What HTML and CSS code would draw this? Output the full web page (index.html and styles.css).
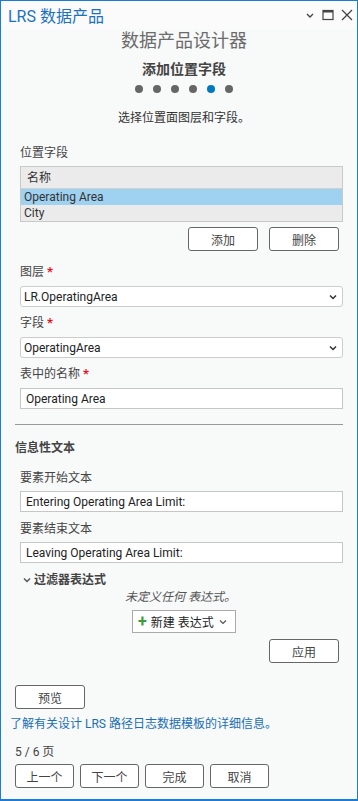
FILE: index.html
```html
<!DOCTYPE html>
<html lang="zh-CN">
<head>
    <meta charset="UTF-8">
    <meta name="viewport" content="width=device-width, initial-scale=1.0">
    <title>LRS 数据产品</title>
    <link rel="stylesheet" href="styles.css">
</head>
<body>
    <div class="window">
        <div class="titlebar">
            <span class="title">LRS 数据产品</span>
            <div class="win-icons">
                <svg width="10" height="10" viewBox="0 0 10 10"><path d="M2 4 L5 7 L8 4" fill="none" stroke="#444" stroke-width="1.4"/></svg>
                <svg width="12" height="12" viewBox="0 0 12 12"><rect x="1" y="1.5" width="10" height="9" fill="none" stroke="#444" stroke-width="1.2"/><rect x="1" y="1" width="10" height="2.5" fill="#444"/></svg>
                <svg width="12" height="12" viewBox="0 0 12 12"><path d="M1 1 L11 11 M11 1 L1 11" stroke="#444" stroke-width="1.3"/></svg>
            </div>
        </div>

        <div class="content">
            <div class="header">
                <div class="designer">数据产品设计器</div>
                <div class="step">添加位置字段</div>
                <div class="dots">
                    <span class="dot"></span>
                    <span class="dot"></span>
                    <span class="dot"></span>
                    <span class="dot"></span>
                    <span class="dot active"></span>
                    <span class="dot"></span>
                </div>
                <p class="desc">选择位置面图层和字段。</p>
            </div>

            <div class="group">
                <div class="label first">位置字段</div>
                <div class="table">
                    <div class="row head">名称</div>
                    <div class="row selected">Operating Area</div>
                    <div class="row">City</div>
                </div>
                <div class="btn-row right">
                    <button class="btn">添加</button>
                    <button class="btn">删除</button>
                </div>

                <div class="label after-btn">图层 <span class="req">*</span></div>
                <div class="select">LR.OperatingArea
                    <svg width="10" height="10" viewBox="0 0 10 10"><path d="M2 3.5 L5 6.5 L8 3.5" fill="none" stroke="#333" stroke-width="1.5"/></svg>
                </div>
                <div class="label">字段 <span class="req">*</span></div>
                <div class="select">OperatingArea
                    <svg width="10" height="10" viewBox="0 0 10 10"><path d="M2 3.5 L5 6.5 L8 3.5" fill="none" stroke="#333" stroke-width="1.5"/></svg>
                </div>
                <div class="label">表中的名称 <span class="req">*</span></div>
                <div class="input">Operating Area</div>
            </div>

            <hr class="divider">

            <div class="section-title">信息性文本</div>
            <div class="group info">
                <div class="label first">要素开始文本</div>
                <div class="input">Entering Operating Area Limit:</div>
                <div class="label">要素结束文本</div>
                <div class="input">Leaving Operating Area Limit:</div>
            </div>

            <div class="filter-title">
                <svg width="8" height="8" viewBox="0 0 8 8"><path d="M1 2.5 L4 5.5 L7 2.5" fill="none" stroke="#555" stroke-width="1.5"/></svg>
                过滤器表达式
            </div>
            <div class="empty">未定义任何 表达式。</div>
            <div class="center">
                <div class="new-btn">
                    <span class="plus">+</span> 新建 表达式
                    <svg width="10" height="10" viewBox="0 0 10 10"><path d="M2 3.5 L5 6.5 L8 3.5" fill="none" stroke="#555" stroke-width="1.2"/></svg>
                </div>
            </div>
            <div class="btn-row right apply">
                <button class="btn">应用</button>
            </div>

            <div class="btn-row preview">
                <button class="btn">预览</button>
            </div>
            <a class="link" href="#">了解有关设计 LRS 路径日志数据模板的详细信息。</a>

            <div class="pager">5 / 6 页</div>
            <div class="btn-row nav">
                <button class="btn small">上一个</button>
                <button class="btn small">下一个</button>
                <button class="btn small">完成</button>
                <button class="btn small">取消</button>
            </div>
        </div>
    </div>
</body>
</html>
```

FILE: styles.css
```css
* {
    margin: 0;
    padding: 0;
    box-sizing: border-box;
}
body {
    font-family: Roboto, "Noto Sans CJK SC", sans-serif;
    font-size: 12px;
    color: #333;
    background: #fff;
}
.window {
    width: 358px;
    height: 801px;
    border: 1px solid #1c7bd4;
    border-bottom-width: 2px;
    background: #f8f9f9;
    display: flex;
    flex-direction: column;
}
.titlebar {
    height: 28px;
    flex-shrink: 0;
    display: flex;
    align-items: center;
    justify-content: space-between;
    padding: 0 4px 0 7px;
    background: #fbfbfb;
}
.title {
    color: #1a72bf;
    font-size: 16px;
}
.win-icons {
    display: flex;
    align-items: center;
    gap: 7px;
}
.content {
    padding: 0 14px 0 9px;
}
.header {
    padding-left: 15px;
}
.designer {
    text-align: center;
    font-size: 18px;
    color: #6b6b6b;
    line-height: 24px;
}
.step {
    text-align: center;
    font-size: 14px;
    font-weight: bold;
    color: #444;
    margin-top: 7px;
    line-height: 18px;
}
.dots {
    display: flex;
    justify-content: center;
    gap: 10px;
    margin-top: 7px;
}
.dot {
    width: 8px;
    height: 8px;
    border-radius: 50%;
    background: #666;
}
.dot.active {
    background: #0079c1;
}
.desc {
    text-align: center;
    margin-top: 16px;
    line-height: 18px;
}
.group {
    padding-left: 10px;
}
.label {
    margin-top: 7px;
    line-height: 18px;
    color: #444;
}
.label.first {
    margin-top: 17px;
}
.label.after-btn {
    margin-top: 12px;
}
.req {
    color: #e81123;
    font-weight: bold;
    font-size: 13px;
    line-height: 0;
}
.table {
    margin-top: 4px;
    border: 1px solid #c9c9c9;
    background: #ebebeb;
}
.row {
    height: 16px;
    line-height: 16px;
    padding-left: 3px;
    color: #333;
}
.row.head {
    height: 22px;
    line-height: 22px;
    padding-left: 6px;
    border-bottom: 1px solid #d0d0d0;
}
.row.selected {
    background: #9fd1f1;
}
.btn-row {
    display: flex;
    gap: 11px;
}
.btn-row.right {
    justify-content: flex-end;
    padding-right: 4px;
    margin-top: 5px;
}
.btn {
    width: 70px;
    height: 24px;
    background: #fff;
    border: 1px solid #666;
    border-radius: 3px;
    font-family: inherit;
    font-size: 12px;
    color: #444;
}
.select {
    margin-top: 5px;
    height: 21px;
    background: #fff;
    border: 1px solid #ccc;
    border-radius: 3px;
    display: flex;
    align-items: center;
    justify-content: space-between;
    padding: 0 4px 0 3px;
    color: #222;
}
.input {
    margin-top: 5px;
    height: 21px;
    background: #fff;
    border: 1px solid #c6c6c6;
    display: flex;
    align-items: center;
    padding-left: 5px;
    color: #222;
}
.divider {
    border: none;
    border-top: 1px solid #999;
    margin: 15px 0 0 5px;
}
.section-title {
    margin-top: 14px;
    padding-left: 5px;
    font-weight: bold;
    color: #444;
    line-height: 18px;
}
.info .label.first {
    margin-top: 12px;
}
.info .input {
    margin-top: 4px;
}
.info .label {
    margin-top: 8px;
}
.filter-title {
    margin-top: 8px;
    padding-left: 13px;
    font-weight: bold;
    color: #444;
    display: flex;
    align-items: center;
    gap: 3px;
    line-height: 18px;
}
.empty {
    text-align: center;
    font-style: italic;
    color: #555;
    margin-top: 0;
    line-height: 16px;
    padding-left: 8px;
}
.center {
    display: flex;
    justify-content: center;
    margin-top: 5px;
    padding-left: 15px;
}
.new-btn {
    width: 104px;
    height: 23px;
    border: 1px solid #aaa;
    display: flex;
    align-items: center;
    gap: 4px;
    padding-left: 5px;
    color: #222;
    background: #fff;
}
.plus {
    color: #3b9c3b;
    font-size: 16px;
    font-weight: bold;
}
.btn-row.apply {
    margin-top: 6px;
}
.preview {
    margin-top: 22px;
    padding-left: 5px;
}
.link {
    display: block;
    color: #1a6fb5;
    text-decoration: none;
    margin-top: 5px;
    line-height: 20px;
}
.pager {
    margin-top: 9px;
    padding-left: 5px;
    line-height: 18px;
    color: #444;
}
.nav {
    margin-top: 3px;
    padding-left: 5px;
    gap: 6px;
}
.btn.small {
    width: 59px;
}
```
